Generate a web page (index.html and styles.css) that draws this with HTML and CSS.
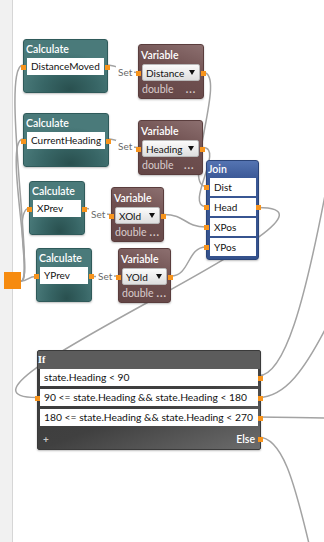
FILE: index.html
```html
<html>
<head>
    <link rel="stylesheet" href="styles.css">
</head>
<body>
    <div class="app">
        <div class="sidebar"></div>
        <div class="canvas">
            <!-- wires are drawn in page coordinates, the viewBox shifts by the sidebar width -->
            <svg class="wires" width="311" height="542" viewBox="13 0 311 542">
                <path d="M106,65 C120,65 124,72.5 138,72.5"/>
                <path d="M108,139 C120,139 126,147.5 138,147.5"/>
                <path d="M82,208 C94,208 99,214.5 111,214.5"/>
                <path d="M89,276.5 C100,276.5 106,276 118,276"/>
                <path d="M203,72.5 C228,72.5 181,186.5 206,186.5"/>
                <path d="M203,147.5 C225,147.5 184,206.5 206,206.5"/>
                <path d="M164,214.5 C186,214.5 184,227 206,227"/>
                <path d="M171,276 C190,276 187,247 206,247"/>
                <path d="M258,207.5 C383,207.5 -88,397.5 37,397.5"/>
                <path d="M21,281 C35,281 0,65 23,65"/>
                <path d="M21,281 C35,281 3,139 23,139"/>
                <path d="M21,281 C32,281 12,208 30,208"/>
                <path d="M21,281 C28,281 28,276.5 36,276.5"/>
                <path d="M258,376 C285,376 305,300 326,190"/>
                <path d="M258,397.5 C285,397.5 305,370 330,320"/>
                <path d="M258,417 C290,417 300,418 330,418"/>
                <path d="M258,437 C282,437 294,480 310,548"/>
            </svg>

            <div class="source"></div>

            <div class="node calc at-calc1">
                <div class="node-title">Calculate</div>
                <div class="field">DistanceMoved<span class="port in"></span><span class="port out"></span></div>
            </div>
            <div class="node calc at-calc2">
                <div class="node-title">Calculate</div>
                <div class="field">CurrentHeading<span class="port in"></span><span class="port out"></span></div>
            </div>
            <div class="node calc at-calc3">
                <div class="node-title">Calculate</div>
                <div class="field">XPrev<span class="port in"></span><span class="port out"></span></div>
            </div>
            <div class="node calc at-calc4">
                <div class="node-title">Calculate</div>
                <div class="field">YPrev<span class="port in"></span><span class="port out"></span></div>
            </div>

            <span class="set-label at-set1">Set</span>
            <span class="set-label at-set2">Set</span>
            <span class="set-label at-set3">Set</span>
            <span class="set-label at-set4">Set</span>

            <div class="node variable at-var1">
                <div class="node-title">Variable</div>
                <div class="dropdown"><span>Distance</span><i class="caret"></i><span class="port in"></span><span class="port out"></span></div>
                <div class="type-row wide"><span>double</span><span>...</span></div>
            </div>
            <div class="node variable at-var2">
                <div class="node-title">Variable</div>
                <div class="dropdown"><span>Heading</span><i class="caret"></i><span class="port in"></span><span class="port out"></span></div>
                <div class="type-row wide"><span>double</span><span>...</span></div>
            </div>
            <div class="node variable at-var3">
                <div class="node-title">Variable</div>
                <div class="dropdown"><span>XOld</span><i class="caret"></i><span class="port in"></span><span class="port out"></span></div>
                <div class="type-row"><span>double</span><span>...</span></div>
            </div>
            <div class="node variable at-var4">
                <div class="node-title">Variable</div>
                <div class="dropdown"><span>YOld</span><i class="caret"></i><span class="port in"></span><span class="port out"></span></div>
                <div class="type-row"><span>double</span><span>...</span></div>
            </div>

            <div class="node join at-join">
                <div class="node-title">Join</div>
                <div class="field">Dist<span class="port in"></span></div>
                <div class="field">Head<span class="port in"></span><span class="port out"></span></div>
                <div class="field">XPos<span class="port in"></span></div>
                <div class="field">YPos<span class="port in"></span></div>
            </div>

            <div class="node if-node at-if">
                <div class="node-title">If</div>
                <div class="field">state.Heading &lt; 90<span class="port out"></span></div>
                <div class="field">90 &lt;= state.Heading &amp;&amp; state.Heading &lt; 180<span class="port in"></span><span class="port out"></span></div>
                <div class="field">180 &lt;= state.Heading &amp;&amp; state.Heading &lt; 270<span class="port out"></span></div>
                <div class="if-footer">
                    <span class="add">+</span>
                    <span class="else">Else<span class="port out"></span></span>
                </div>
            </div>
        </div>
    </div>
</body>
</html>
```

FILE: styles.css
```css
body {
    margin: 0;
    background-color: #ffffff;
    font-family: 'Lato', 'Open Sans', sans-serif;
    font-size: 10px;
    color: #111;
}
.app {
    display: flex;
    height: 542px;
    overflow: hidden;
}
.sidebar {
    flex: none;
    width: 12px;
    background-color: #f1f1f1;
    border-right: 1px solid #d6d6d6;
}
.canvas {
    position: relative;
    flex: 1;
}
.wires {
    position: absolute;
    left: 0;
    top: 0;
}
.wires path {
    fill: none;
    stroke: #a3a3a3;
    stroke-width: 1.5;
}

/* node positions on the canvas (page x minus 13) */
.at-calc1 { left: 10px; top: 39px; }
.at-calc2 { left: 10px; top: 113px; }
.at-calc3 { left: 16px; top: 181px; }
.at-calc4 { left: 23px; top: 248px; }
.at-var1 { left: 125px; top: 44px; }
.at-var2 { left: 125px; top: 120px; }
.at-var3 { left: 98px; top: 187px; }
.at-var4 { left: 105px; top: 248px; }
.at-join { left: 193px; top: 160px; }
.at-if { left: 24px; top: 350px; }
.at-set1 { left: 103px; top: 66px; }
.at-set2 { left: 103px; top: 140px; }
.at-set3 { left: 76px; top: 208px; }
.at-set4 { left: 83px; top: 270px; }

.source {
    position: absolute;
    left: -9px;
    top: 272px;
    width: 17px;
    height: 17px;
    background-color: #f68b0f;
}
.set-label {
    position: absolute;
    padding: 0 2px;
    line-height: 13px;
    background-color: #ffffff;
    color: #6a6a6a;
}

.node {
    position: absolute;
    display: flex;
    flex-direction: column;
    box-sizing: border-box;
    border-radius: 3px;
    box-shadow: 0 1px 2px rgba(0, 0, 0, 0.25);
}
.node-title {
    height: 18px;
    line-height: 18px;
    color: #ffffff;
    font-size: 10.5px;
    font-weight: 600;
}
.field {
    position: relative;
    box-sizing: border-box;
    background-color: #ffffff;
    white-space: nowrap;
}
.port {
    position: absolute;
    top: 50%;
    width: 5px;
    height: 5px;
    margin-top: -2px;
    background-color: #f7941d;
}

/* Calculate */
.calc {
    padding: 0 3px 17px 3px;
    border: 1px solid #2f5a5a;
    background: radial-gradient(ellipse 60% 70% at 55% 95%, #29504f 0%, #386666 55%, #4a7a7a 100%);
}
.calc .node-title {
    margin-left: -1px;
}
.calc .field {
    min-width: 48px;
    height: 17px;
    line-height: 17px;
    padding: 0 4px;
}
.calc .port.in { left: -6px; }
.calc .port.out { right: -6px; }

/* Variable */
.variable {
    padding: 0 3px;
    border: 1px solid #5a3d3d;
    background: linear-gradient(200deg, #8c6f6f 0%, #6f5050 45%, #634545 100%);
}
.variable .node-title {
    height: 19px;
    line-height: 20px;
    margin-left: -1px;
}
.dropdown {
    position: relative;
    display: flex;
    align-items: center;
    gap: 5px;
    min-width: 45px;
    height: 17px;
    box-sizing: border-box;
    padding: 0 4px 0 3px;
    border: 1px solid #b9b9b9;
    border-radius: 2px;
    background: linear-gradient(#fbfbfb, #dedede);
}
.caret {
    margin-left: auto;
    width: 0;
    height: 0;
    border-left: 3.5px solid transparent;
    border-right: 3.5px solid transparent;
    border-top: 5px solid #111;
}
.dropdown .port.in { left: -7px; }
.dropdown .port.out { right: -7px; }
.type-row {
    display: flex;
    gap: 3px;
    height: 17px;
    line-height: 16px;
    font-size: 10.5px;
    color: #d9cccc;
}
.type-row.wide {
    justify-content: space-between;
    padding-right: 4px;
}
.type-row span:last-child {
    font-weight: 700;
    letter-spacing: 1px;
}

/* Join */
.join {
    width: 53px;
    padding: 0 2px 3px 3px;
    gap: 2px;
    border: 1px solid #2b4478;
    background: linear-gradient(#5574b2 0%, #3a5896 18%, #34518c 100%);
}
.join .node-title {
    height: 15px;
    line-height: 17px;
    margin-left: -2px;
}
.join .field {
    height: 18px;
    line-height: 18px;
    padding-left: 4px;
}
.join .port.in { left: -6px; }
.join .port.out { right: -5px; }

/* If */
.if-node {
    width: 224px;
    padding: 0 2px;
    gap: 3px;
    border: 1px solid #3a3a3a;
    border-radius: 2px;
    background: linear-gradient(#5c5c5c 0, #5c5c5c 18px, transparent 18px),
                linear-gradient(160deg, #3a3a3a 0%, #404040 55%, #6c6c6c 100%);
}
.if-node .node-title {
    height: 15px;
    line-height: 17px;
    margin-left: -2px;
    font-family: 'Liberation Serif', serif;
    font-size: 10px;
    font-weight: 700;
}
.if-node .field {
    height: 17px;
    line-height: 17px;
    padding-left: 4px;
    font-size: 10.3px;
}
.if-node .port.in { left: -5px; }
.if-node .port.out { right: -5px; }
.if-footer {
    display: flex;
    justify-content: space-between;
    align-items: center;
    height: 20px;
    color: #ffffff;
}
.add {
    padding-left: 3px;
    font-weight: 700;
    color: #c8c8c8;
}
.else {
    position: relative;
    padding-right: 3px;
    font-size: 10.5px;
    font-weight: 600;
}
.else .port.out { right: -5px; }
```
